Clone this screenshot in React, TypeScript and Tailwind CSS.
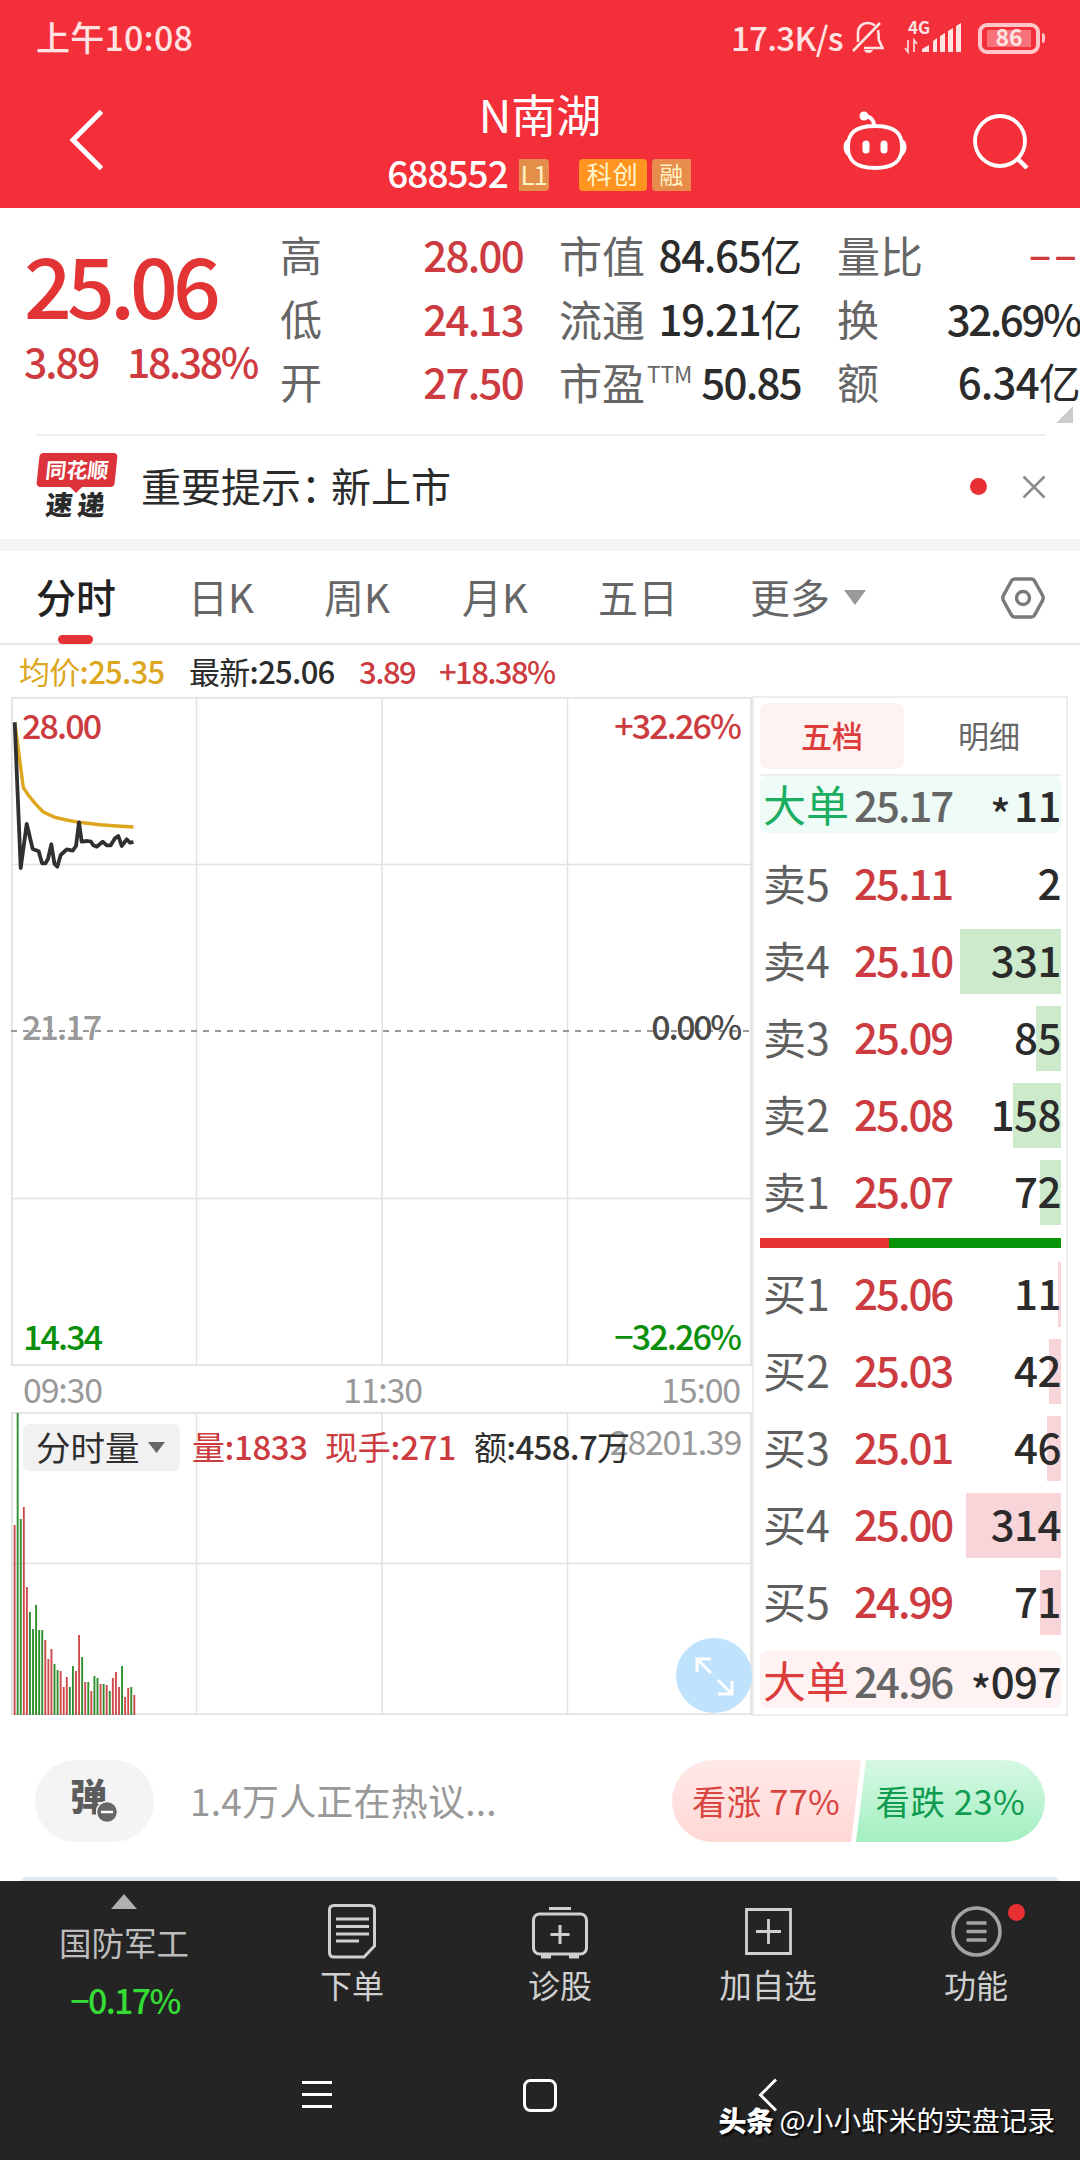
import React from 'react';

type Level = { label: string; price: string; volume: string; bar: number };
type VolumeBar = [height: number, up: boolean];

const tabs = ['分时', '日K', '周K', '月K', '五日'];

const sells: Level[] = [
  { label: '卖5', price: '25.11', volume: '2', bar: 0 },
  { label: '卖4', price: '25.10', volume: '331', bar: 101 },
  { label: '卖3', price: '25.09', volume: '85', bar: 25 },
  { label: '卖2', price: '25.08', volume: '158', bar: 48 },
  { label: '卖1', price: '25.07', volume: '72', bar: 21 },
];

const buys: Level[] = [
  { label: '买1', price: '25.06', volume: '11', bar: 3 },
  { label: '买2', price: '25.03', volume: '42', bar: 12 },
  { label: '买3', price: '25.01', volume: '46', bar: 14 },
  { label: '买4', price: '25.00', volume: '314', bar: 95 },
  { label: '买5', price: '24.99', volume: '71', bar: 21 },
];

const volumeBars: VolumeBar[] = [
  [190, true], [302, false], [196, false], [208, true], [128, true], [103, false], [86, false], [110, false],
  [85, false], [85, false], [75, true], [56, true], [66, true], [51, false], [45, false], [44, true],
  [28, true], [38, true], [28, false], [49, false], [44, true], [80, true], [58, false], [33, true],
  [33, false], [24, true], [39, false], [37, false], [31, true], [31, false], [30, true], [24, false],
  [37, true], [43, true], [28, true], [49, false], [18, true], [27, true], [28, false], [20, true],
];

const pricePoints =
  '3.7,25.3 9.7,171 15.7,127 21.7,152 27.7,154.3 31,166.3 34.5,166.3 37,162 40.3,147.3 43.5,167 46.3,169.7 49.7,158 55.7,152.3 61.7,153.7 65,149 68,125.3 70.7,144.7 76.3,144 80,144.7 82.3,148.3 85.7,149.7 91.7,144.7 95.7,148.3 99.7,148.3 104,141.3 107.3,139 110.7,149 115.7,142.3 119,145.7 122.5,145';
const averagePoints =
  '3.7,25.3 5.7,39.7 12.3,90.7 17.3,98 24,106.3 32.3,115 44,120.3 55.7,123 68,125.3 89,127.7 105.7,129 122.5,130';

const StatusBar: React.FC = () => (
  <div className="flex h-[76px] items-center justify-between pl-9 pr-[35px] text-[#ffe3e3]">
    <span className="pb-0.5 text-[34px] font-medium leading-none tracking-[0.2px]">上午10:08</span>
    <div className="flex items-center">
      <span className="pb-0.5 text-[33px] font-medium leading-none tracking-[-0.700px]">17.3K/s</span>
      <svg className="ml-[9px] h-[34px] w-8" viewBox="0 0 32 34" fill="none" stroke="currentColor" strokeWidth="2.6">
        <path d="M6 21V12C6 6 10 2 16 2c3 0 5 1 7 2.500M26 9c.6 2 .6 5 .8 10l3.700 8H12M1 30 28 2" />
        <path d="M12 29h9c-1 4-8 4-9 0z" fill="currentColor" stroke="none" />
      </svg>
      <svg className="ml-[21px] h-[34px] w-[57px] overflow-visible" viewBox="0 0 57 34" fill="currentColor">
        <text x="3" y="13" className="text-[17px] font-bold">4G</text>
        <path d="M3 19v12l-3-4M9 31V19l3 4" fill="none" stroke="currentColor" strokeWidth="1.600" />
        <path d="M17 31v-3l7-4v7zM28 31V20l4-3v14zM35 31V15l5-3v19zM43 31V10l5-3v24zM51 31V5l5-3v29z" />
      </svg>
      <div className="ml-[16px] flex items-center">
        <div className="flex h-[31px] w-[62px] items-center justify-center rounded-[9px] border-4 border-[#ffc5c8]">
          <div className="flex h-[17px] w-[44px] items-center justify-center bg-[#f8727a]">
            <span className="pb-[3px] text-[23px] font-bold leading-none">86</span>
          </div>
        </div>
        <div className="ml-0.5 h-2.5 w-[3px] rounded-r bg-[#ffc5c8]" />
      </div>
    </div>
  </div>
);

const Header: React.FC = () => (
  <header className="h-[208px] bg-[#f32f39] text-white">
    <StatusBar />
    <div className="grid h-[132px] grid-cols-[380px_1fr_380px]">
      <svg className="ml-[68px] mt-[33px] h-[62px] w-[38px]" viewBox="0 0 38 62" fill="none" stroke="currentColor" strokeWidth="5">
        <path d="M33.500 2.500 5 31l28.500 28.500" />
      </svg>
      <div className="flex flex-col items-center">
        <h1 className="mt-[15px] text-[45px] leading-[46px]">N南湖</h1>
        <div className="mt-[22px] flex h-8 items-center pr-[2px]">
          <span className="pb-1.5 text-[37px] font-medium leading-none tracking-[-1px]">688552</span>
          <span className="ml-[11px] flex h-8 w-[30px] items-center justify-center rounded-r bg-[#e38e49] pb-[3px] text-[26px] leading-none tracking-[-1px] text-[#fff3c4]">L1</span>
          <span className="ml-[30px] flex h-8 w-[68px] items-center justify-center rounded bg-[#ff9520] pb-[3px] text-[25px] leading-none tracking-[1px] text-[#fff6cf]">科创</span>
          <span className="ml-[5px] flex h-8 w-[39px] items-center justify-center rounded-l bg-[#e78c4a] pb-[3px] text-[24px] leading-none text-[#fff3c4]">融</span>
        </div>
      </div>
      <div className="flex">
        <svg className="ml-[142px] mt-[34px] h-[62px] w-[66px]" viewBox="0 0 66 62" fill="none" stroke="currentColor" strokeWidth="3.800">
          <ellipse cx="22" cy="6" rx="4.500" ry="4.500" fill="currentColor" stroke="none" />
          <path d="M22 6c6 0 10 4 10 9M33 16c-20 0-27 7-27 21s8 21 27 21 27-7 27-21-7-21-27-21z" />
          <path d="M6 29c-6 2-6 14 0 17zM60 29c6 2 6 14 0 17z" fill="currentColor" stroke="none" />
          <path d="M24 34v6M42 34v6" strokeWidth="7" strokeLinecap="round" />
        </svg>
        <svg className="ml-[64px] mt-[37px] h-[58px] w-[60px]" viewBox="0 0 60 58" fill="none" stroke="currentColor" strokeWidth="3.800">
          <circle cx="28" cy="28" r="25" />
          <path d="m45 45 10 10" strokeWidth="4.500" />
        </svg>
      </div>
    </div>
  </header>
);

const QuoteSummary: React.FC = () => (
  <section className="flex h-[226px] text-[42px] leading-none">
    <div className="w-[280px] shrink-0 pl-6 text-[#e23434]">
      <div className="mt-[33px] text-[84px] font-medium leading-[84px] tracking-[-4.900px]">25.06</div>
      <div className="mt-[15px] flex text-[41px] font-medium leading-[41px] tracking-[-2px] text-[#cf3a3e]">
        <span className="w-[103px]">3.89</span>
        <span className="tracking-[-2.400px]">18.38%</span>
      </div>
    </div>
    <div className="flex w-[243px] shrink-0 flex-col pt-[25px]">
      {[['高', '28.00'], ['低', '24.13'], ['开', '27.50']].map(([label, value]) => (
        <div key={label} className="flex h-[63.500px] justify-between">
          <span className="text-[42px] text-[#666]">{label}</span>
          <span className="font-medium tracking-[-1.700px] text-[#cc3b40]">{value}</span>
        </div>
      ))}
    </div>
    <div className="ml-9 flex w-[242px] shrink-0 flex-col pt-[25px]">
      <div className="flex h-[63.500px] justify-between">
        <span className="text-[43px] text-[#666]">市值</span>
        <span className="tracking-[-1.300px] text-[#2b2b2b]"><b className="font-medium">84.65</b>亿</span>
      </div>
      <div className="flex h-[63.500px] justify-between">
        <span className="text-[43px] text-[#666]">流通</span>
        <span className="tracking-[-1.300px] text-[#2b2b2b]"><b className="font-medium">19.21</b>亿</span>
      </div>
      <div className="flex h-[63.500px] justify-between">
        <span className="flex text-[43px] text-[#666]">市盈<span className="ml-0.5 text-[22.500px] leading-[26px]">TTM</span></span>
        <span className="font-medium tracking-[-1.700px] text-[#2b2b2b]">50.85</span>
      </div>
    </div>
    <div className="ml-9 flex w-[243px] shrink-0 flex-col pt-[25px]">
      <div className="flex h-[63.500px] justify-between">
        <span className="text-[43px] text-[#666]">量比</span>
        <span className="-mt-0.5 font-medium tracking-[3px] text-[#cc3b40]">––</span>
      </div>
      <div className="flex h-[63.500px] justify-between">
        <span className="text-[#666]">换</span>
        <span className="font-medium tracking-[-2.400px] text-[#2b2b2b]">32.69%</span>
      </div>
      <div className="flex h-[63.500px] justify-between">
        <span className="text-[#666]">额</span>
        <span className="tracking-[-0.800px] text-[#2b2b2b]"><b className="font-medium">6.34</b>亿</span>
      </div>
      <svg className="-mt-[18px] ml-[219px] h-[17px] w-[17px]" viewBox="0 0 17 17">
        <path d="M17 0v17H0z" fill="#ccc" />
      </svg>
    </div>
  </section>
);

const NewsRow: React.FC = () => (
  <section className="ml-9 mr-[34px] flex h-[105px] items-start border-t-2 border-[#f0f0f0]">
    <div className="mt-[17px] w-[81px] leading-none">
      <div className="ml-0.5 flex h-[34px] w-[78px] -skew-x-6 items-center justify-center rounded bg-[#dc333a] pb-0.5 text-[21px] font-bold text-white">同花顺</div>
      <svg className="ml-[34px] h-1.5 w-3" viewBox="0 0 12 6"><path d="M0 0h12L6 6z" fill="#dc333a" /></svg>
      <div className="-mt-[3px] flex -skew-x-6 gap-[5px] pl-[10px] text-[27px] font-black text-[#2b2b2b]">
        <span>速</span>
        <span>递</span>
      </div>
    </div>
    <p className="ml-[24px] mt-[26px] flex text-[40px] leading-[46px] text-[#2b2b2b]">
      重要提示<span className="w-[30px]">：</span>新上市
    </p>
    <div className="ml-auto mt-[42px] h-[17px] w-[17px] rounded-full bg-[#e83034]" />
    <svg className="ml-[35px] mt-[39px] h-6 w-6" viewBox="0 0 24 24" fill="none" stroke="#8c8c8c" strokeWidth="2.500">
      <path d="m1.500 1.500 21 21M22.500 1.500l-21 21" />
    </svg>
  </section>
);

const TabBar: React.FC = () => (
  <nav className="grid h-[94px] grid-cols-[152px_136px_138px_136px_152px_1fr_80px] border-b-2 border-[#e8e8e8] pl-9 text-[40px] leading-none text-[#666]">
    {tabs.map((tab, i) => (
      <div key={tab} className={i === 0 ? 'font-medium text-[#222]' : ''}>
        <div className="mt-[25px] whitespace-nowrap">{tab}</div>
        {i === 0 && <div className="ml-[22px] mt-[19px] h-[9px] w-[35px] rounded-full bg-[#e33136]" />}
      </div>
    ))}
    <div className="flex">
      <span className="mt-[25px]">更多</span>
      <svg className="ml-[14px] mt-[39px] h-[15px] w-[22px]" viewBox="0 0 22 15"><path d="M0 0h22L11 15z" fill="#999" /></svg>
    </div>
    <svg className="mt-[26px] h-[42px] w-[46px]" viewBox="0 0 46 42" fill="none" stroke="#7a7a7a" strokeWidth="3.400" strokeLinejoin="round">
      <path d="M14.500 2h17q2 0 3 1.800l8 14.500q1.500 2.700 0 5.400l-8 14.500q-1 1.800-3 1.800h-17q-2 0-3-1.800l-8-14.500q-1.500-2.700 0-5.400l8-14.500q1-1.800 3-1.800z" />
      <circle cx="23" cy="21" r="6.500" />
    </svg>
  </nav>
);

const PriceChart: React.FC = () => (
  <div className="relative h-[669px] text-[34px] leading-none tracking-[-1.900px]">
    <svg className="h-[669px] w-[741px]" viewBox="0 0 741 669" fill="none" stroke="#e2e2e2" strokeWidth="1.500">
      <rect x="0.750" y="0.750" width="739.500" height="667.500" strokeWidth="2" />
      <path d="M185.500 0v669M371 0v669M556.500 0v669M0 167.500h741M0 501.500h741" />
      <path d="M0 334h741" stroke="#999" strokeWidth="2" strokeDasharray="6 6" />
      <polyline points={averagePoints} stroke="#dea51f" strokeWidth="3.400" />
      <polyline points={pricePoints} stroke="#2f3030" strokeWidth="3.800" strokeLinejoin="round" />
    </svg>
    <span className="absolute left-[11px] top-[11px] font-medium text-[#cc3b40]">28.00</span>
    <span className="absolute right-[12px] top-[11px] font-medium text-[#cc3b40]">+32.26%</span>
    <span className="absolute left-[11px] top-[312px] font-medium text-[#999]">21.17</span>
    <span className="absolute right-[12px] top-[312px] font-medium tracking-[-2.300px] text-[#4a4a4a]">0.00%</span>
    <span className="absolute left-[12px] top-[622px] font-medium text-[#0a8f0a]">14.34</span>
    <span className="absolute right-[12px] top-[622px] font-medium text-[#0a8f0a]">−32.26%</span>
  </div>
);

const VolumeChart: React.FC = () => (
  <div className="relative h-[303px] text-[33px] leading-none">
    <svg className="h-[303px] w-[741px]" viewBox="0 0 741 303" fill="none" stroke="#e2e2e2" strokeWidth="1.500">
      <rect x="0.750" y="0.750" width="739.500" height="301.500" strokeWidth="2" />
      <path d="M185.500 0v303M371 0v303M556.500 0v303M0 151.500h741" />
      {volumeBars.map(([height, up], i) => (
        <path key={i} d={`M${3.6 + i * 3.07} 303v-${height}`} stroke={up ? '#cf4a4a' : '#2f8f2f'} strokeWidth="1.900" />
      ))}
    </svg>
    <span className="absolute right-[11px] top-[12px] text-[34px] tracking-[-1.300px] text-[#999]">28201.39</span>
    <div className="absolute left-[12px] top-3 flex h-[47px] items-center whitespace-nowrap text-[#2f2f2f]">
      <div className="flex h-[47px] w-[157px] items-center rounded-md bg-[#f1f1f1] pl-[13px] text-[34.500px]">
        <span className="pb-[3px]">分时量</span>
        <svg className="ml-2 h-[11px] w-[17px]" viewBox="0 0 17 11"><path d="M0 0h17l-8.500 11z" fill="#666" /></svg>
      </div>
      <span className="w-[134px] pb-[3px] pl-[12px] tracking-[-0.400px] text-[#cc3b40]">量<b className="font-medium">:1833</b></span>
      <span className="w-[149px] pb-[3px] pl-[11px] tracking-[-0.200px] text-[#cc3b40]">现手<b className="font-medium">:271</b></span>
      <span className="pb-[3px] pl-[11px] tracking-[-0.700px]">额<b className="font-medium">:458.7</b>万</span>
    </div>
    <svg className="absolute bottom-[2px] right-0 h-[75px] w-[76px]" viewBox="0 0 76 75" fill="none" stroke="#fff" strokeWidth="3">
      <ellipse cx="38" cy="37.500" rx="38" ry="37.500" fill="#bfe3fc" stroke="none" />
      <path d="M35 35 21 21m0 13V21h14M42 42l14 14m0-13v13H42" />
    </svg>
  </div>
);

const BookRow: React.FC<{ level: Level; sell?: boolean }> = ({ level, sell }) => (
  <div className="flex h-[77px] items-center">
    <span className="w-[94px] pb-[5px] pl-[3px] text-[43px] text-[#5f5f5f]">{level.label}</span>
    <span className="pb-[5px] font-medium tracking-[-2px] text-[#cc3b40]">{level.price}</span>
    <div className="relative ml-auto flex h-[65px] items-center justify-end">
      <div
        className={`absolute right-0 h-[65px] ${sell ? 'bg-[#cdeacd]' : 'bg-[#f8d5d8]'}`}
        style={{ width: level.bar }}
      />
      <span className="relative pb-[5px] font-medium tracking-[-0.500px] text-[#2b2b2b]">{level.volume}</span>
    </div>
  </div>
);

const OrderBook: React.FC = () => (
  <aside className="h-[1020px] w-[316px] shrink-0 border-2 border-[#ededf0] pl-1.5 pr-[5px] text-[42px] leading-none">
    <div className="flex h-[78px] items-start border-b-2 border-[#ededf0] pt-[5px] text-[31px]">
      <div className="flex h-[66px] w-[144px] items-center justify-center rounded-lg bg-[#fff3f2] pb-[3px] font-medium text-[#dc3c3c]">五档</div>
      <div className="flex h-[66px] flex-1 items-center justify-center pb-[3px] pl-[13px] text-[#666]">明细</div>
    </div>
    <div className="flex h-[57px] items-center rounded-lg bg-[#effbf6]">
      <span className="w-[94px] pb-[2px] pl-[3px] text-[43px] text-[#1cae60]">大单</span>
      <span className="pb-[2px] font-medium tracking-[-2px] text-[#666]">25.17</span>
      <span className="ml-auto flex pb-[2px] font-medium tracking-[-0.500px] text-[#2b2b2b]">
        <span className="mr-1 translate-y-[9px]">*</span>11
      </span>
    </div>
    <div className="mt-[13px]">
      {sells.map(level => <BookRow key={level.label} level={level} sell />)}
    </div>
    <div className="mb-[8px] mt-[7px] flex h-[10px] bg-[#079307]">
      <div className="w-[129px] bg-[#e73236]" />
    </div>
    <div>
      {buys.map(level => <BookRow key={level.label} level={level} />)}
    </div>
    <div className="mt-[10px] flex h-[57px] items-center rounded-lg bg-[#fef3f2]">
      <span className="w-[94px] pl-[3px] text-[43px] text-[#dc3c3c]">大单</span>
      <span className="font-medium tracking-[-2px] text-[#666]">24.96</span>
      <span className="ml-auto flex font-medium tracking-[-0.500px] text-[#2b2b2b]">
        <span className="translate-y-[9px]">*</span>097
      </span>
    </div>
  </aside>
);

const Discussion: React.FC = () => (
  <section className="flex h-[166px] flex-col">
    <div className="mt-[45px] flex h-[82px] items-center pl-[35px] pr-[35px] leading-none">
      <div className="flex h-[82px] w-[119px] items-center justify-center rounded-full bg-[#f4f4f4]">
        <div className="relative mr-3 text-[37px] font-black text-[#5c5c5c]">
          <span className="block pb-3">弹</span>
          <svg className="absolute bottom-[3px] left-[26px] h-[22px] w-[22px]" viewBox="0 0 22 22">
            <circle cx="11" cy="11" r="10.500" fill="#666" stroke="#f4f4f4" strokeWidth="1.500" />
            <path d="M5 11h12" stroke="#fff" strokeWidth="2.500" />
          </svg>
        </div>
      </div>
      <span className="ml-[36px] pb-[2px] text-[37px] tracking-[0.200px] text-[#999]">1.4万人正在热议...</span>
      <div className="ml-auto flex h-[82px] w-[373px] overflow-hidden rounded-full text-[34.500px]">
        <div className="flex h-[82px] w-[194px] items-center justify-center bg-linear-to-b from-[#ffe9e9] to-[#ffd8d5] pb-0.5 text-[#d9453f] [clip-path:polygon(0_0,189px_0,179px_100%,0_100%)]">
          <span className="mr-1.5 whitespace-nowrap tracking-[0.200px]">看涨 77%</span>
        </div>
        <div className="-ml-[10px] flex h-[82px] w-[189px] items-center justify-center bg-linear-to-b from-[#d6f8e4] to-[#a3efc0] pb-0.5 text-[#109c50] [clip-path:polygon(10px_0,100%_0,100%_100%,0_100%)]">
          <span className="whitespace-nowrap tracking-[0.500px]">看跌 23%</span>
        </div>
      </div>
    </div>
    <div className="mx-[22px] mt-auto h-1 rounded-t-full bg-[#dfe7f1]" />
  </section>
);

const BottomBar: React.FC = () => (
  <footer className="relative h-[279px] bg-[#242424] leading-none text-[#d0d0d0]">
    <div className="grid h-[170px] grid-cols-[248px_208px_208px_208px_208px] text-[32px]">
      <div className="flex flex-col items-center">
        <svg className="mt-[13px] h-[15px] w-[26px]" viewBox="0 0 26 15"><path d="M13 0l13 15H0z" fill="#b0b0b0" /></svg>
        <span className="mt-[17px] text-[32.500px] text-[#bdbdbd]">国防军工</span>
        <span className="mt-[24px] pl-0.5 text-[34px] font-medium tracking-[-1.700px] text-[#36dc36]">−0.17%</span>
      </div>
      <div className="flex flex-col items-center">
        <svg className="mt-[22px] h-[56px] w-[50px]" viewBox="0 0 50 56" fill="none" stroke="currentColor" strokeWidth="3">
          <path d="M7 2.500h36q4.500 0 4.500 4.500v36L37 54H7q-4.500 0-4.500-4.500V7Q2.500 2.500 7 2.500zM9 16h33M9 23.500h33M9 31h33M9 38h23" />
        </svg>
        <span className="mt-[9px]">下单</span>
      </div>
      <div className="flex flex-col items-center">
        <svg className="mt-[24px] h-[54px] w-[58px]" viewBox="0 0 58 54" fill="none" stroke="currentColor" strokeWidth="3">
          <rect x="2.500" y="9" width="53" height="40" rx="6" />
          <path d="M18 3.500h22M29 20v19M19.500 29.500h19" />
          <path d="M10 51.500h10M38 51.500h10" strokeWidth="4" />
        </svg>
        <span className="mt-[9px]">诊股</span>
      </div>
      <div className="flex flex-col items-center">
        <svg className="mt-[27px] h-[47px] w-[47px]" viewBox="0 0 47 47" fill="none" stroke="currentColor" strokeWidth="2.800">
          <path d="M1.500 1.500h44v44h-44zM23.500 11v25M11 23.500h25" />
        </svg>
        <span className="mt-[13px] text-[32.500px]">加自选</span>
      </div>
      <div className="flex flex-col items-center">
        <div className="relative mt-[25px]">
          <svg className="h-[51px] w-[51px]" viewBox="0 0 51 51" fill="none" stroke="#a3a3a3" strokeWidth="3.600">
            <circle cx="25.500" cy="25.500" r="23.500" />
            <path d="M15.500 17h20M15.500 25.500h20M15.500 34h20" />
          </svg>
          <div className="absolute -right-[23px] -top-[2px] h-[17px] w-[17px] rounded-full bg-[#e83034]" />
        </div>
        <span className="mt-[11px]">功能</span>
      </div>
    </div>
    <div className="flex pt-[27px] text-white">
      <svg className="ml-[302px] h-9 w-[30px]" viewBox="0 0 30 36" stroke="currentColor" strokeWidth="3">
        <path d="M0 4.500h30M0 16.500h30M0 28.500h30" />
      </svg>
      <svg className="ml-[191px] h-9 w-[34px]" viewBox="0 0 34 36" fill="none" stroke="currentColor" strokeWidth="3">
        <rect x="1.500" y="2.500" width="31" height="30" rx="6" />
      </svg>
      <svg className="ml-[201px] h-9 w-5" viewBox="0 0 20 36" fill="none" stroke="currentColor" strokeWidth="3">
        <path d="M18 1.500 2.500 17 18 32.500" />
      </svg>
    </div>
    <div className="absolute bottom-[26px] right-[25px] flex items-center gap-1.5 whitespace-nowrap text-white [text-shadow:2px_2px_2px_#000]">
      <span className="text-[28px] font-black tracking-[-0.500px]">头条</span>
      <span className="text-[27.700px]">@小小虾米的实盘记录</span>
    </div>
  </footer>
);

export default function App() {
  return (
    <div className="h-[2160px] w-[1080px] overflow-hidden bg-white font-['Noto_Sans_CJK_SC',sans-serif]">
      <Header />
      <QuoteSummary />
      <NewsRow />
      <div className="h-3 bg-[#f4f4f4]" />
      <TabBar />
      <div className="flex h-[51px] pl-[19px] pt-[10px] text-[31px] leading-none tracking-[-0.700px] text-[#2b2b2b]">
        <span className="w-[170px] text-[#dca71e]">均价<b className="font-medium">:25.35</b></span>
        <span className="w-[170px]">最新<b className="font-medium">:25.06</b></span>
        <span className="w-[80px] font-medium tracking-[-1.500px] text-[#cc3b40]">3.89</span>
        <span className="font-medium tracking-[-1.600px] text-[#cc3b40]">+18.38%</span>
      </div>
      <div className="flex h-[1019px] pl-[11px]">
        <div className="w-[741px] shrink-0 pt-px">
          <PriceChart />
          <div className="grid h-[46px] grid-cols-3 px-[12px] pt-[6px] text-[34px] leading-none tracking-[-1.200px] text-[#999]">
            <span>09:30</span>
            <span className="pl-0.5 text-center">11:30</span>
            <span className="text-right">15:00</span>
          </div>
          <VolumeChart />
        </div>
        <OrderBook />
      </div>
      <Discussion />
      <BottomBar />
    </div>
  );
}
